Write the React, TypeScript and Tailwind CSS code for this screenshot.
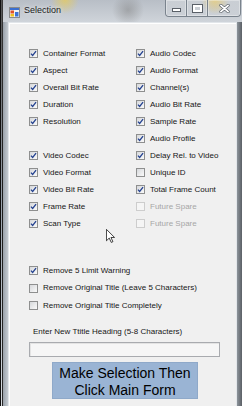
import React from "react";

type CB = { label?: string; checked?: boolean; disabled?: boolean; empty?: boolean };

const Check = ({ checked, disabled }: { checked?: boolean; disabled?: boolean }) => (
  <span
    className={
      disabled
        ? "w-[9px] h-[9px] shrink-0 border border-[#cdcdcd] bg-[#f5f5f5] flex items-center justify-center"
        : "w-[9px] h-[9px] shrink-0 border border-[#8e8f8f] bg-gradient-to-br from-[#d6d8db] to-[#fafafa] flex items-center justify-center"
    }
  >
    {checked && (
      <svg viewBox="0 0 9 9" className="w-[7px] h-[7px]">
        <path d="M1.2 4.6 L3.4 7 L7.8 1.4" stroke="#22408f" strokeWidth="1.6" fill="none" />
      </svg>
    )}
  </span>
);

const Row = ({ item, h = "h-[17px]" }: { item: CB; h?: string }) => (
  <div className={`${h} flex items-center gap-[5px]`}>
    {!item.empty && (
      <>
        <Check checked={item.checked} disabled={item.disabled} />
        <span
          className={
            item.disabled
              ? "text-[8px] leading-[10px] text-[#a6a6a6] whitespace-nowrap"
              : "text-[8px] leading-[10px] text-[#161616] whitespace-nowrap"
          }
        >
          {item.label}
        </span>
      </>
    )}
  </div>
);

const left: CB[] = [
  { label: "Container Format", checked: true },
  { label: "Aspect", checked: true },
  { label: "Overall Bit Rate", checked: true },
  { label: "Duration", checked: true },
  { label: "Resolution", checked: true },
  { empty: true },
  { label: "Video Codec", checked: true },
  { label: "Video Format", checked: true },
  { label: "Video Bit Rate", checked: true },
  { label: "Frame Rate", checked: true },
  { label: "Scan Type", checked: true },
];

const right: CB[] = [
  { label: "Audio Codec", checked: true },
  { label: "Audio Format", checked: true },
  { label: "Channel(s)", checked: true },
  { label: "Audio Bit Rate", checked: true },
  { label: "Sample Rate", checked: true },
  { label: "Audio Profile", checked: true },
  { label: "Delay Rel. to Video", checked: true },
  { label: "Unique ID", checked: false },
  { label: "Total Frame Count", checked: true },
  { label: "Future Spare", disabled: true },
  { label: "Future Spare", disabled: true },
];

const bottom: CB[] = [
  { label: "Remove 5 Limit Warning", checked: true },
  { label: "Remove Original Title (Leave 5 Characters)", checked: false },
  { label: "Remove Original Title Completely", checked: false },
];

export default function App() {
  return (
    <div
      className="w-[242px] h-[406px] overflow-hidden relative flex bg-[#2a2a2a]"
      style={{ fontFamily: '"Liberation Sans", Arial, sans-serif' }}
    >
      {/* desktop strip on the left */}
      <div className="w-[3px] h-full bg-gradient-to-b from-[#3a3a3a] via-[#1c1c1c] to-[#2a2a2a] flex">
        <div className="w-[1px] h-full bg-[#111]" />
        <div className="w-[1px] h-full bg-gradient-to-b from-[#555] via-[#9aa3ad] to-[#d8dde2]" />
      </div>

      {/* window */}
      <div className="flex-1 flex flex-col bg-[#aeb5bd]">
        {/* title bar */}
        <div className="h-[22px] shrink-0 flex items-start bg-[radial-gradient(circle_at_62px_0px,rgba(232,204,90,0.75),transparent_14px),radial-gradient(circle_at_212px_0px,rgba(225,190,80,0.8),transparent_14px),radial-gradient(circle_at_125px_10px,rgba(120,120,120,0.45),transparent_16px),linear-gradient(to_bottom,#b8bec6,#cfd4da)]">
          <div className="ml-[6px] mt-[7px] w-[11px] h-[11px]">
            <svg viewBox="0 0 11 11" className="w-[11px] h-[11px]">
              <rect x="0.5" y="0.5" width="10" height="10" fill="#f2f2f2" stroke="#8a8a8a" />
              <rect x="1" y="1" width="9" height="2" fill="#3b6fd0" />
              <rect x="1.5" y="3.5" width="3.5" height="3" fill="#e0502a" />
              <rect x="1.5" y="7" width="3.5" height="2.5" fill="#f0c020" />
              <rect x="6" y="5" width="3.5" height="4.5" fill="#3a72d8" />
            </svg>
          </div>
          <span className="ml-[4px] mt-[5px] text-[9px] leading-[11px] text-[#1a1a1a] [text-shadow:0_0_4px_rgba(255,255,255,0.9)]">
            Selection
          </span>
          <div className="ml-auto mr-[1px] flex h-[17px] rounded-b-[4px] border border-t-0 border-[#7a838d] overflow-hidden">
            <div className="w-[21px] h-full border-r border-[#7a838d] bg-gradient-to-b from-[rgba(255,255,255,0.25)] to-[rgba(255,255,255,0.05)] shadow-[inset_0_0_0_1px_rgba(255,255,255,0.35)] flex items-center justify-center">
              <span className="mt-[3px] w-[9px] h-[4px] bg-white border border-[#5a6068]" />
            </div>
            <div className="w-[21px] h-full border-r border-[#7a838d] bg-gradient-to-b from-[rgba(255,255,255,0.25)] to-[rgba(255,255,255,0.05)] shadow-[inset_0_0_0_1px_rgba(255,255,255,0.35)] flex items-center justify-center">
              <span className="w-[9px] h-[7px] border-[2px] border-white outline outline-1 outline-[#5a6068]" />
            </div>
            <div className="w-[32px] h-full bg-gradient-to-b from-[rgba(255,255,255,0.25)] to-[rgba(255,255,255,0.05)] shadow-[inset_0_0_0_1px_rgba(255,255,255,0.35)] flex items-center justify-center">
              <svg viewBox="0 0 12 10" className="w-[11px] h-[9px]">
                <path d="M2 1.5 L10 8.5 M10 1.5 L2 8.5" stroke="#5a6068" strokeWidth="3.4" strokeLinecap="round" />
                <path d="M2 1.5 L10 8.5 M10 1.5 L2 8.5" stroke="#ffffff" strokeWidth="2" strokeLinecap="round" />
              </svg>
            </div>
          </div>
        </div>

        {/* body */}
        <div className="flex-1 flex">
          <div className="w-[5px] bg-gradient-to-r from-[#9aa2ab] to-[#c4cad0]" />
          <div className="w-[229px] bg-[#f0f0f0] border-t border-l border-r border-[#e2e6ea] shadow-[inset_1px_1px_0_#ffffff] flex flex-col pl-[20px] pt-[22px]">
            <div className="flex">
              <div className="w-[107px] flex flex-col">
                {left.map((it, i) => (
                  <Row key={i} item={it} />
                ))}
              </div>
              <div className="flex flex-col">
                {right.map((it, i) => (
                  <Row key={i} item={it} />
                ))}
              </div>
            </div>
            <div className="mt-[30px] flex flex-col">
              {bottom.map((it, i) => (
                <Row key={i} item={it} h="h-[17.6px]" />
              ))}
            </div>
            <div className="mt-[12px] ml-[4px] text-[8px] leading-[10px] text-[#161616] whitespace-nowrap">
              Enter New Ttitle Heading (5-8 Characters)
            </div>
            <div className="mt-[5px] w-[191px] h-[15px] border border-[#a9abaf] bg-[#f6f6f6] shadow-[inset_1px_1px_0_#e3e3e3]" />
            <div className="mt-[5px] ml-[23px] w-[146px] h-[37px] bg-[#9ab4d4] border border-[#8fa9c9] pt-[2px] text-center text-[14px] leading-[17px] text-black">
              Make Selection Then
              <br />
              Click Main Form
            </div>
          </div>
          <div className="w-[5px] bg-gradient-to-r from-[#8d949b] to-[#5b6066]" />
        </div>
      </div>

      {/* mouse cursor */}
      <svg viewBox="0 0 12 19" className="absolute left-[106px] top-[229px] w-[9px] h-[14px]">
        <path d="M0.5 0.5 L0.5 16 L4.3 12.3 L7 18.2 L9.3 17.2 L6.6 11.5 L11.5 11.5 Z" fill="#ffffff" stroke="#000000" strokeWidth="1" />
      </svg>
    </div>
  );
}
